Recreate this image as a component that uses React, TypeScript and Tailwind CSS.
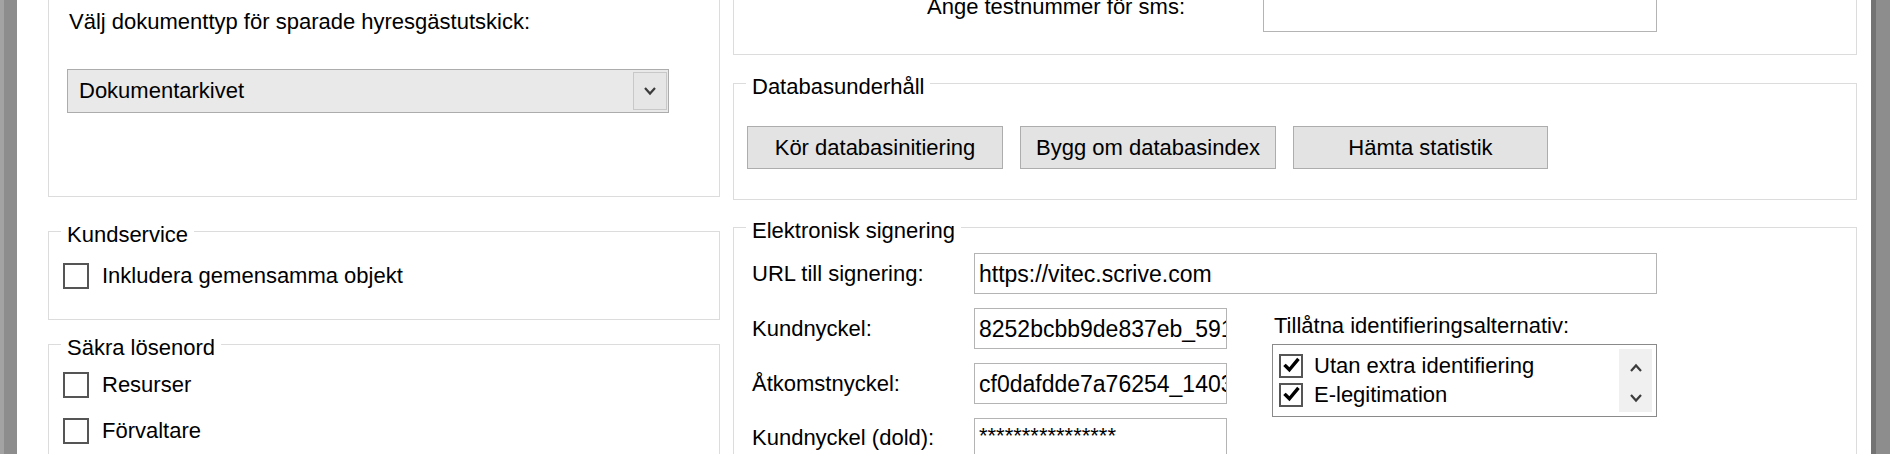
import React from "react";

function Box({ checked = false, size = "lg" }: { checked?: boolean; size?: "lg" | "sm" }) {
  const cls =
    size === "lg"
      ? "w-[26px] h-[26px] border-2 border-[#555555] bg-white flex items-center justify-center shrink-0"
      : "w-[24px] h-[24px] border-2 border-[#555555] bg-white flex items-center justify-center shrink-0";
  return (
    <div className={cls}>
      {checked && (
        <svg width="17" height="17" viewBox="0 0 16 16">
          <path d="M2.5 8.5 L6 12 L13.5 3" fill="none" stroke="#000" strokeWidth="3.2" strokeLinecap="square" />
        </svg>
      )}
    </div>
  );
}

function Chevron({ up = false }: { up?: boolean }) {
  return (
    <svg width="14" height="10" viewBox="0 0 14 10">
      <path
        d={up ? "M2 8 L7 2.5 L12 8" : "M2 2 L7 7.5 L12 2"}
        fill="none"
        stroke="#3c3c3c"
        strokeWidth="2.2"
      />
    </svg>
  );
}

function Group({ title, className, children }: { title: string; className: string; children: React.ReactNode }) {
  return (
    <fieldset className={`border border-[#dcdcdc] min-w-0 ${className}`}>
      <legend className="ml-[12px] px-[6px] pt-[8px] leading-[26px]">{title}</legend>
      {children}
    </fieldset>
  );
}

function TextBox({ w, children }: { w: string; children?: React.ReactNode }) {
  return (
    <div
      className={`${w} h-[41px] border border-[#b4b4b4] bg-white flex items-center pl-[4px] overflow-hidden whitespace-nowrap text-[23px]`}
    >
      {children}
    </div>
  );
}

export default function App() {
  return (
    <div className="w-[1890px] h-[454px] overflow-hidden flex bg-white text-[22px] leading-[26px] text-[#000000] font-['Liberation_Sans',Arial,sans-serif]">
      <div className="w-[17px] h-full bg-[#8d8d8d] border-l-[4px] border-[#a3a3a3] shrink-0" />
      <div className="flex-1 pl-[31px] pr-[14px] grid grid-cols-[672px_1124px] gap-x-[13px] items-start">
        {/* Left column */}
        <div className="flex flex-col">
          <div className="-mt-[40px] h-[237px] border border-[#dcdcdc] pt-[48px] pl-[18px]">
            <div className="ml-[2px]">Välj dokumenttyp för sparade hyresgästutskick:</div>
            <div className="mt-[34px] w-[602px] h-[44px] border border-[#acacac] bg-[#e9e9e9] flex items-center">
              <span className="flex-1 pl-[11px]">Dokumentarkivet</span>
              <div className="w-[34px] h-[38px] mr-[1px] border border-[#c8c8c8] bg-[#e6e6e6] flex items-center justify-center">
                <Chevron />
              </div>
            </div>
          </div>

          <Group title="Kundservice" className="mt-[17px] pb-[30px]">
            <div className="mt-[15px] pl-[14px] flex items-center gap-[13px]">
              <Box />
              <span>Inkludera gemensamma objekt</span>
            </div>
          </Group>

          <Group title="Säkra lösenord" className="mt-[7px] h-[200px]">
            <div className="mt-[11px] pl-[14px] flex flex-col gap-[20px]">
              <div className="flex items-center gap-[13px]">
                <Box />
                <span>Resurser</span>
              </div>
              <div className="flex items-center gap-[13px]">
                <Box />
                <span>Förvaltare</span>
              </div>
            </div>
          </Group>
        </div>

        {/* Right column */}
        <div className="flex flex-col">
          <div className="-mt-[40px] h-[95px] border border-[#dcdcdc] pt-[30px] pl-[18px] flex items-start">
            <div className="w-[433px] text-right mt-[3px]">Ange testnummer för sms:</div>
            <div className="ml-[78px] w-[394px] h-[41px] border border-[#b4b4b4] bg-white" />
          </div>

          <Group title="Databasunderhåll" className="mt-[11px] pb-[30px]">
            <div className="mt-[26px] pl-[13px] flex gap-[17px]">
              <button className="w-[256px] h-[43px] border border-[#adadad] bg-[#e3e3e3]">Kör databasinitiering</button>
              <button className="w-[256px] h-[43px] border border-[#adadad] bg-[#e3e3e3]">Bygg om databasindex</button>
              <button className="w-[255px] h-[43px] border border-[#adadad] bg-[#e3e3e3]">Hämta statistik</button>
            </div>
          </Group>

          <Group title="Elektronisk signering" className="mt-[10px] h-[300px]">
            <div className="pl-[18px] pt-[9px] flex flex-col gap-[14px]">
              <div className="flex items-center">
                <div className="w-[222px]">URL till signering:</div>
                <TextBox w="w-[683px]">https://vitec.scrive.com</TextBox>
              </div>
              <div className="flex items-start">
                <div className="flex flex-col gap-[14px]">
                  <div className="flex items-center">
                    <div className="w-[222px]">Kundnyckel:</div>
                    <TextBox w="w-[253px]">8252bcbb9de837eb_5914a</TextBox>
                  </div>
                  <div className="flex items-center">
                    <div className="w-[222px]">Åtkomstnyckel:</div>
                    <TextBox w="w-[253px]">cf0dafdde7a76254_1403b</TextBox>
                  </div>
                  <div className="flex items-start">
                    <div className="w-[222px] pt-[7px]">Kundnyckel (dold):</div>
                    <div className="w-[253px] h-[60px] border border-[#b4b4b4] bg-white pl-[4px] pt-[4px] overflow-hidden whitespace-nowrap">
                      ****************
                    </div>
                  </div>
                </div>
                <div className="ml-[45px] w-[385px] pt-[5px]">
                  <div className="ml-[2px]">Tillåtna identifieringsalternativ:</div>
                  <div className="mt-[5px] h-[73px] border border-[#8a8a8a] bg-white p-[4px] flex">
                    <div className="flex-1 pl-[2px] pt-[2px] flex flex-col">
                      <div className="h-[29px] flex items-center gap-[11px]">
                        <Box checked size="sm" />
                        <span>Utan extra identifiering</span>
                      </div>
                      <div className="h-[29px] flex items-center gap-[11px]">
                        <Box checked size="sm" />
                        <span>E-legitimation</span>
                      </div>
                    </div>
                    <div className="w-[33px] h-full bg-[#f0f0f0] flex flex-col items-center pt-[14px]">
                      <Chevron up />
                      <div className="mt-[20px]">
                        <Chevron />
                      </div>
                    </div>
                  </div>
                </div>
              </div>
            </div>
          </Group>
        </div>
      </div>
      <div className="w-[19px] h-full bg-[#8d8d8d] border-l-[5px] border-[#737373] shrink-0" />
    </div>
  );
}
